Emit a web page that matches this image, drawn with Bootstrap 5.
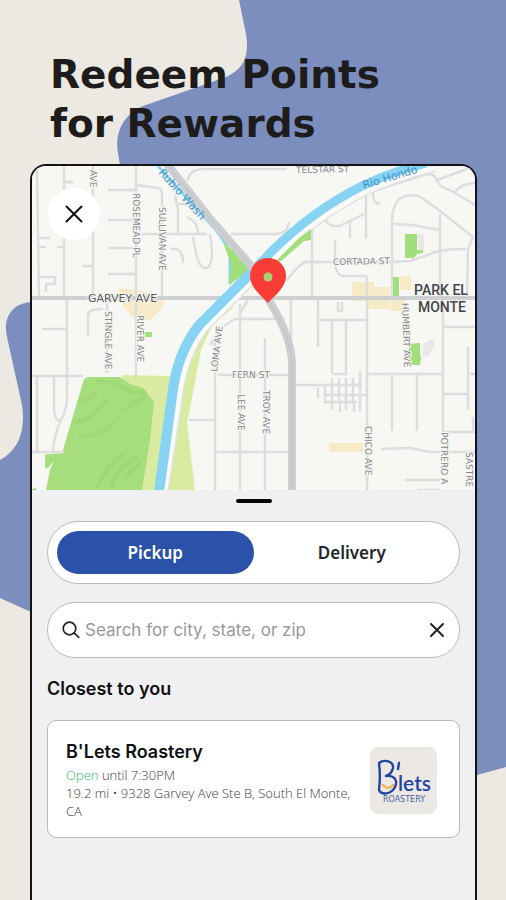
<!DOCTYPE html>
<html lang="en">
<head>
<meta charset="utf-8">
<meta name="viewport" content="width=device-width, initial-scale=1">
<title>Redeem Points for Rewards</title>
<link href="https://cdn.jsdelivr.net/npm/bootstrap@5.3.0/dist/css/bootstrap.min.css" rel="stylesheet">
<style>
  body { background: #ece8e2; color: #101012; font-family: "Noto Sans", sans-serif; }
  .backdrop { position: absolute; inset: 0; width: 100%; height: 100%; z-index: -1; }
  .headline { font: 700 39px/49px "DejaVu Sans", sans-serif; color: #1d1c1b; padding: 50px 0 0 50px; margin-bottom: 16px; }
  .phone { margin: 0 29px 0 30px; border: 2px solid #131316; border-bottom: 0; border-radius: 16px 16px 0 0; background: #f0f0f3; overflow: hidden; }
  .map-close { position: absolute; top: 22px; left: 16px; width: 52px; height: 52px; }
  .map-label { font: 400 9px "DejaVu Sans", sans-serif; fill: #85858a; paint-order: stroke; stroke: #f7f7f4; stroke-width: 2px; }
  .map-main { font-size: 11px; fill: #55555a; }
  .map-water { font-size: 11px; fill: #3f91c4; stroke: none; }
  .map-area { font: 500 14px "Roboto", sans-serif; fill: #454549; text-anchor: middle; }
  .grabber { width: 36px; height: 4px; background: #050505; }
  .sheet { padding: 9px 15px 0 15px; }
  .outline-box { background: #fff; border: 1px solid #b9b9bd; }
  .switcher { padding: 9px; height: 63px; margin-top: 18px; }
  .switcher .btn { font-size: 17px; line-height: 24px; font-weight: 600; border: 0; }
  .switcher .active { background: #2a52a8; color: #fff; }
  .search { height: 56px; margin-top: 18px; padding: 0 13px; }
  .search input { font: 400 17px/24px "Inter", sans-serif; }
  .search input::placeholder { color: #98989b; opacity: 1; }
  .section-title { font: 600 18px/24px "Inter", sans-serif; margin: 19px 0; }
  .store { border-radius: 9px; padding: 19px 22px 17px 18px; }
  .store-name { font: 600 18px/24px "Inter", sans-serif; margin-bottom: 2px; }
  .store-line { font: 300 13px/18px "Open Sans", "Noto Sans", sans-serif; color: #3c3c40; }
  .open-now { color: #2fb566; }
</style>
<script src="https://cdn.jsdelivr.net/npm/bootstrap@5.3.0/dist/js/bootstrap.bundle.min.js"></script>
</head>
<body>
<div class="position-relative d-flex flex-column min-vh-100 overflow-hidden z-0">
  <svg class="backdrop" viewBox="0 0 506 900" preserveAspectRatio="xMidYMin slice" aria-hidden="true">
    <path fill="#7b8ebd" d="M239 0L246 34C250 58 242 70 226 77L143 106C120 116 115 137 118 153L124 190L124 298L34 302C10 302 3 320 7 337L22 405C26 432 18 450 0 460V598L40 616L300 822L470 777L506 767V0Z"/>
  </svg>

  <h1 class="headline">Redeem Points<br>for Rewards</h1>

  <main class="phone flex-grow-1">
    <div class="position-relative">
      <svg class="d-block w-100" viewBox="32 166 443 324" role="img" aria-label="Map of South El Monte">
        <rect x="32" y="166" width="443" height="324" fill="#f7f7f4"/>
        <g fill="#f7e8bd" opacity=".8">
          <path d="M118 288L138 290L148 293L165 303L158 312L150 321L132 317L122 304Z"/>
          <path d="M352 282H374V287H390V309H368V301H352Z"/>
          <path d="M400 276H411V290H400ZM391 299H404V311H391Z"/>
          <path d="M329 443H363V452H329Z"/>
        </g>
        <g fill="#d8eba0">
          <path d="M122 375L170 376L156 490H140Z"/>
          <path d="M166 490L182 385Q187 350 205 328L229 303H234L232 308L212 326L201 350L200 356L187 423L195 490Z"/>
        </g>
        <path fill="#a7de7d" d="M88 377L120 377L130 384L143 388L154 402L150 440L142 490H46L50 470L54 461L48 468H45V455H40L62 453L84 379Z"/>
        <g stroke="#9cd474" stroke-width="4" fill="none" stroke-linecap="round" opacity=".6">
          <path d="M98 381L118 384L131 392H144"/><path d="M75 422Q89 421 98 408L107 400"/><path d="M80 436Q99 438 113 423"/><path d="M124 410L144 397"/><path d="M97 486L110 465L122 455"/><path d="M112 486Q117 468 136 457"/><path d="M124 477L140 463"/><path d="M80 402Q91 400 96 393"/>
        </g>
        <g fill="#a0df7b">
          <path d="M405 234H417V250H423V253L417 254L414 258H405Z"/><path d="M393 277H399V297H393Z"/>
          <path d="M410 344L420 343V352L421 359L420 365H411L408 354Z"/><path d="M143 332H152V337H143ZM32 489L36 488L36 490H32Z"/>
        </g>
        <path fill="#e7e7e7" d="M418 234h6v16h-6zM423 344l8-5 4 4-5 12-7 2z"/>

        <g fill="none" stroke="#dcdddd" stroke-width="2.4" stroke-linejoin="round">
          <path d="M37 166L39 298M64 166V298M93 166V298M136 166V376M64 182H73M108 190H136M108 220H136M108 248H136M108 274H136M136 185L158 188Q163 189 162 197V298"/>
          <path d="M142 234H207M175 195L178 210V234M176 204H186M187 217Q199 223 198 234M193 237C196 256 199 269 206 268S213 250 210 234M171 249Q183 247 183 263M188 181Q188 170 203 169H287M231 234H276Q288 233 289 222"/>
          <path d="M38 238H50M38 247H46M57 247H65M82 266H92M40 277H55V284H46V292M67 298V398Q67 410 60 422Q54 436 53 451M88 336V315Q88 309 103 309M42 329H67M32 376H83M37 376V452M54 377V408Q54 420 61 422M32 452H64M107 298V373"/>
          <path d="M310 230L330 210L373 191L427 174Q436 174 437 181Q441 188 450 190L475 205M437 180L475 166M454 193Q460 184 475 183"/>
          <path d="M312 230V298M286 281Q300 263 306 262H393L410 261L430 254Q440 249 466 249M325 220Q333 230 344 224L364 214M350 222V238M366 195V239M373 192Q373 205 380 203M335 240V262M335 262Q336 276 344 276M344 276H366"/>
          <path d="M392 300V222C392 198 403 193 419 196L435 207L473 237L468 249L467 298M394 224L412 225L440 230M440 214V300"/>
          <path d="M291 300V343M318 300V347M338 302V311H342V302M367 276V490M317 320H367M250 319H285M332 320V373M346 320V374H332M443 298V432H475M368 374H443M392 375V431M417 375V431M443 327H475M468 347V410M443 394H468M470 374H476M473 417V432M381 449L410 448L430 452H475M405 480H440M417 490H440"/>
          <path d="M296 385H362M318 388V398M325 386V402H357M332 378V410M339 378V404M346 378V410M353 378V404M360 371V411M326 395H367M340 404V412M354 404V412"/>
          <path d="M265 338V490M218 375H292M215 340V490M240 304V490M189 420H215M215 452H292M210 345L221 328L235 319H262M248 300L240 313"/>
        </g>
        <path stroke="#cfd0d1" stroke-width="4" d="M32 298H476"/>
        <path fill="none" stroke="#8bd5f3" stroke-width="3" d="M158 166L205 218Q225 238 230 255V284"/>
        <path fill="none" stroke="#e0e1e1" stroke-width="14" d="M162 490L176 398Q181 355 203 326L270 259Q313 215 363 190Q395 175 434 165"/>
        <path fill="none" stroke="#fafaf8" stroke-width="11" d="M162 490L176 398Q181 355 203 326L270 259Q313 215 363 190Q395 175 434 165"/>
        <path fill="#a0df7b" d="M223 242L253 268L229 285L231 264Z"/>
        <path fill="#a0df7b" d="M276 261L299 238L311 229V240L304 241L280 262Z"/>
        <path fill="none" stroke="#86d3f4" stroke-width="10" d="M159 492L172 396Q177 352 200 324L264 260"/>
        <path fill="none" stroke="#86d3f4" stroke-width="9" d="M262 262L269 254Q311 212 360 187Q391 172 426 163"/>
        <path fill="none" stroke="#cdced0" stroke-width="8" d="M164 160L208 216L253 268L270 302Q291 337 292 362V490"/>
        <path fill="none" stroke="#bfc1c4" stroke-width="1" d="M164 160L208 216L253 268L270 302Q291 337 292 362V490"/>

        <text class="map-label" transform="translate(90 170) rotate(90)">AVE</text>
        <text class="map-label" transform="translate(133 193) rotate(90)">ROSEMEAD PL</text>
        <text class="map-label" transform="translate(159 207) rotate(90)">SULLIVAN AVE</text>
        <text class="map-label" transform="translate(105 311) rotate(90)">STINGLE AVE</text>
        <text class="map-label" transform="translate(137 315) rotate(90)">RIVER AVE</text>
        <text class="map-label" transform="translate(217 372) rotate(-83)">LOMA AVE</text>
        <text class="map-label" transform="translate(238 394) rotate(90)">LEE AVE</text>
        <text class="map-label" transform="translate(263 390) rotate(90)">TROY AVE</text>
        <text class="map-label" transform="translate(365 426) rotate(90)">CHICO AVE</text>
        <text class="map-label" transform="translate(441 432) rotate(90)">POTRERO A</text>
        <text class="map-label" transform="translate(466 452) rotate(90)">SASTRE</text>
        <text class="map-label" transform="translate(402 303) rotate(88)">HUMBERT AVE</text>
        <text class="map-label" x="232" y="378">FERN ST</text>
        <text class="map-label" transform="translate(333 265) rotate(-1)">CORTADA ST</text>
        <text class="map-label" transform="translate(296 173) rotate(-1)">TELSTAR ST</text>
        <text class="map-label map-main" x="88" y="302">GARVEY AVE</text>
        <text class="map-label map-water" transform="translate(158 173) rotate(48)">Rubio Wash</text>
        <text class="map-label map-water" transform="translate(364 189) rotate(-17)">Rio Hondo</text>
        <text class="map-area" x="441" y="295">PARK EL</text>
        <text class="map-area" x="442" y="312">MONTE</text>

        <path fill="#fa3c36" d="M268 303C263 297 250 288 250 276A18 18 0 0 1 286 276C286 288 273 297 268 303Z"/>
        <circle cx="268" cy="277" r="4.500" fill="#a8cf72"/>
      </svg>
      <button type="button" class="map-close btn btn-light bg-white border-0 rounded-circle p-0 d-flex align-items-center justify-content-center" aria-label="Close map">
        <svg width="18" height="18" viewBox="0 0 18 18" stroke="#111" stroke-width="2" stroke-linecap="round" aria-hidden="true"><path d="M1.500 1.500L16.500 16.500M16.500 1.500L1.500 16.500"/></svg>
      </button>
    </div>

    <div class="sheet">
      <div class="grabber rounded-pill mx-auto"></div>
      <div class="outline-box switcher rounded-pill d-flex" role="group" aria-label="Order type">
        <button type="button" class="btn rounded-pill active flex-fill w-50">Pickup</button>
        <button type="button" class="btn rounded-pill flex-fill w-50">Delivery</button>
      </div>

      <div class="outline-box search rounded-pill d-flex align-items-center">
        <label for="place" class="d-flex me-1" aria-label="Search location">
          <svg width="20" height="20" viewBox="0 0 20 20" fill="none" stroke="#222" stroke-width="1.700" stroke-linecap="round" aria-hidden="true"><circle cx="8.500" cy="8.500" r="6.300"/><path d="M13.200 13.200L17.800 17.300"/></svg>
        </label>
        <input id="place" type="text" class="flex-grow-1 border-0 bg-transparent p-0 w-50" placeholder="Search for city, state, or zip">
        <button type="button" class="btn border-0 p-0 d-flex" aria-label="Clear search">
          <svg width="18" height="18" viewBox="0 0 18 18" stroke="#222" stroke-width="2" stroke-linecap="round" aria-hidden="true"><path d="M3 3L15 15M15 3L3 15"/></svg>
        </button>
      </div>

      <h2 class="section-title">Closest to you</h2>

      <article class="outline-box store d-flex align-items-center">
        <div class="flex-fill pe-2">
          <h3 class="store-name">B'Lets Roastery</h3>
          <div class="store-line"><span class="open-now">Open</span> until 7:30PM</div>
          <div class="store-line">19.2 mi • 9328 Garvey Ave Ste B, South El Monte, CA</div>
        </div>
        <svg class="flex-shrink-0" width="67" height="67" viewBox="0 0 67 67" role="img" aria-label="B'lets Roastery logo">
          <rect width="67" height="67" rx="8" fill="#ece8e3"/>
          <g fill="none" stroke="#21469f" stroke-width="2.400" stroke-linecap="round" stroke-linejoin="round">
            <path d="M9 43C10 35 10 24 9 16C14 12 24 14 23 21C22 26 19 28 16 29C25 28 28 34 25 40C21 48 11 48 9 43"/>
            <path d="M29 16L28 22"/>
          </g>
          <path d="M13 38Q18 44 23 38" fill="none" stroke="#f3b650" stroke-width="2.400" stroke-linecap="round"/>
          <text x="28" y="44" fill="#21469f" font-family="Lato, sans-serif" font-size="21" font-weight="600">lets</text>
          <text x="34" y="55" text-anchor="middle" fill="#49639f" font-family="DejaVu Sans, sans-serif" font-size="8" font-weight="400">ROASTERY</text>
        </svg>
      </article>
    </div>
  </main>
</div>
</body>
</html>
